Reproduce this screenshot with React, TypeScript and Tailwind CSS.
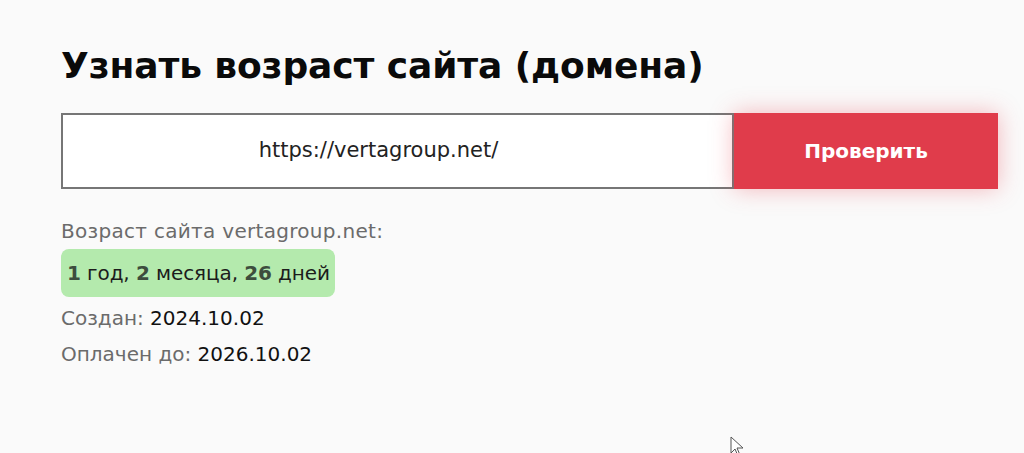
import React from "react";

export default function App() {
  const font = { fontFamily: "'DejaVu Sans', 'Noto Sans', sans-serif" };
  return (
    <div className="relative min-h-[453px] w-[1024px] overflow-hidden bg-[#fafafa] text-black" style={font}>
      <div className="pl-[61px] pt-[40px] w-[998px]">
        <h1 className="text-[36px] leading-[52px] font-bold tracking-[-0.1px] text-[#0a0a0a]">
          Узнать возраст сайта (домена)
        </h1>
        <div className="mt-[21px] flex h-[76px]">
          <div className="flex-1 flex items-center justify-center border-2 border-[#767676] bg-white pr-[38px] text-[21px] text-[#222]">
            https://vertagroup.net/
          </div>
          <button className="w-[264px] h-full bg-[#e03c4b] text-white font-bold text-[20px] shadow-[0_0_22px_rgba(232,60,75,0.35)]">
            Проверить
          </button>
        </div>
        <div className="mt-[30px] text-[20px] leading-[24px] tracking-[0.3px] text-[#6b6b6b]">
          Возраст сайта vertagroup.net:
        </div>
        <div className="mt-[6px] inline-flex items-center h-[48px] pl-[6px] pr-[5px] rounded-[8px] bg-[#b4eaad] text-[20px] tracking-[-0.1px] text-[#1c1c1c]">
          <span className="font-bold text-[#3d4d3d]">1</span>&nbsp;год,&nbsp;
          <span className="font-bold text-[#3d4d3d]">2</span>&nbsp;месяца,&nbsp;
          <span className="font-bold text-[#3d4d3d]">26</span>&nbsp;дней
        </div>
        <div className="mt-[6px] text-[20px] leading-[30px] text-[#6b6b6b]">
          Создан: <span className="text-[#111]">2024.10.02</span>
        </div>
        <div className="mt-[6px] text-[20px] leading-[30px] text-[#6b6b6b]">
          Оплачен до: <span className="text-[#111]">2026.10.02</span>
        </div>
      </div>
      <svg className="absolute left-[730px] top-[436px]" width="16" height="22" viewBox="0 0 16 22">
        <path d="M1 1 L1 17 L5 13 L8 20 L10 19 L7 12 L13 12 Z" fill="#fff" stroke="#555" strokeWidth="1" />
      </svg>
    </div>
  );
}
